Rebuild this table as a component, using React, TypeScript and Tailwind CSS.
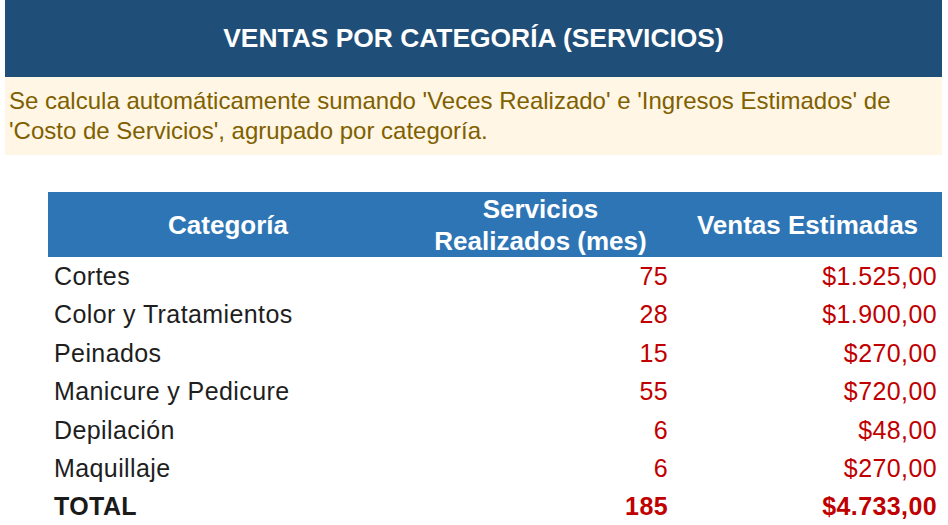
const rows = [
  { cat: "Cortes", qty: "75", total: "$1.525,00" },
  { cat: "Color y Tratamientos", qty: "28", total: "$1.900,00" },
  { cat: "Peinados", qty: "15", total: "$270,00" },
  { cat: "Manicure y Pedicure", qty: "55", total: "$720,00" },
  { cat: "Depilación", qty: "6", total: "$48,00" },
  { cat: "Maquillaje", qty: "6", total: "$270,00" },
];

export default function App() {
  return (
    <div className="w-[948px] h-[525px] bg-white overflow-hidden font-['Liberation_Sans',Arial,sans-serif]">
      <div className="ml-[5px] w-[937px]">
        <div className="h-[77px] bg-[#1f4e79] flex items-center justify-center">
          <h1 className="text-[26.4px] font-bold text-white leading-none">
            VENTAS POR CATEGORÍA (SERVICIOS)
          </h1>
        </div>
        <div className="h-[78px] bg-[#fff6e5] pl-[4px] pt-[9px]">
          <p className="text-[24px] leading-[30px] text-[#7f6000]">
            Se calcula automáticamente sumando 'Veces Realizado' e 'Ingresos Estimados' de
            <br />
            'Costo de Servicios', agrupado por categoría.
          </p>
        </div>
      </div>

      <div className="ml-[48px] mt-[37px] w-[894px]">
        <div className="grid grid-cols-[360px_265px_269px] h-[65px] bg-[#2e75b6] text-white font-bold text-[26px] leading-[32px]">
          <div className="flex items-center justify-center">Categoría</div>
          <div className="flex items-center justify-center text-center">
            Servicios
            <br />
            Realizados (mes)
          </div>
          <div className="flex items-center justify-center">Ventas Estimadas</div>
        </div>

        {rows.map((r) => (
          <div
            key={r.cat}
            className="grid grid-cols-[360px_265px_269px] h-[38.4px] text-[25px] leading-[38.4px] tracking-[0.4px]"
          >
            <div className="pl-[6px] text-[#1e1e1e]">{r.cat}</div>
            <div className="pr-[5px] text-right text-[#c00000]">{r.qty}</div>
            <div className="pr-[5px] text-right text-[#c00000]">{r.total}</div>
          </div>
        ))}

        <div className="grid grid-cols-[360px_265px_269px] h-[38.4px] text-[25px] leading-[38.4px] tracking-[0.4px] font-bold">
          <div className="pl-[6px] text-[#1a1a1a]">TOTAL</div>
          <div className="pr-[5px] text-right text-[#c00000]">185</div>
          <div className="pr-[5px] text-right text-[#c00000]">$4.733,00</div>
        </div>
      </div>
    </div>
  );
}
